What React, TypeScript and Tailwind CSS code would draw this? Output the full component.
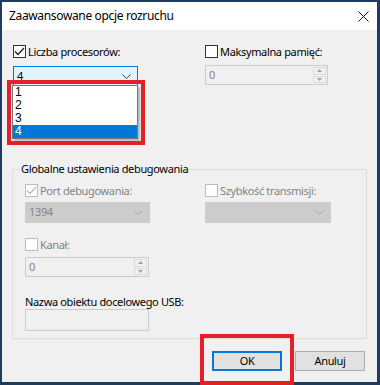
import React from "react";

function Check({ checked = false, disabled = false }: { checked?: boolean; disabled?: boolean }) {
  return (
    <span
      className={`flex h-[13px] w-[13px] shrink-0 items-center justify-center border bg-white ${
        disabled ? "border-[#bcbcbc]" : "border-[#333333]"
      }`}
    >
      {checked && (
        <svg width="11" height="9" viewBox="0 0 11 9" aria-hidden>
          <path
            d="M1 4.5 L4 7.5 L10 1"
            fill="none"
            stroke={disabled ? "#bcbcbc" : "#222222"}
            strokeWidth="1.3"
          />
        </svg>
      )}
    </span>
  );
}

function CheckRow({
  label,
  checked,
  disabled,
}: {
  label: string;
  checked?: boolean;
  disabled?: boolean;
}) {
  return (
    <div className="flex h-[13px] items-center gap-[2px]">
      <Check checked={checked} disabled={disabled} />
      <span className={`leading-[13px] ${disabled ? "text-[#838383]" : "text-black"}`}>{label}</span>
    </div>
  );
}

function Chevron({ color }: { color: string }) {
  return (
    <svg width="9" height="5" viewBox="0 0 9 5" aria-hidden>
      <path d="M0.5 0.5 L4.5 4.5 L8.5 0.5" fill="none" stroke={color} strokeWidth="1" />
    </svg>
  );
}

function Select({
  value,
  width,
  active,
}: {
  value: string;
  width: string;
  active?: boolean;
}) {
  return (
    <div
      className={`flex h-[21px] items-center justify-between border pl-[3px] pr-[6px] ${width} ${
        active ? "border-[#0078d7] bg-[#e5f1fb] text-black" : "border-[#cccccc] bg-[#cccccc] text-[#838383]"
      }`}
    >
      <span>{value}</span>
      <Chevron color={active ? "#444444" : "#a8a8a8"} />
    </div>
  );
}

function Spin({ width }: { width: string }) {
  return (
    <div className={`flex h-[20px] border border-[#cccccc] bg-[#f0f0f0] ${width}`}>
      <span className="flex flex-1 items-center pl-[3px] text-[#838383]">0</span>
      <div className="flex w-[15px] flex-col gap-px p-px">
        <span className="flex flex-1 items-center justify-center border border-[#dcdcdc] bg-[#f0f0f0]">
          <svg width="5" height="3" viewBox="0 0 5 3" aria-hidden>
            <path d="M0 3 L2.5 0 L5 3 Z" fill="#a0a0a0" />
          </svg>
        </span>
        <span className="flex flex-1 items-center justify-center border border-[#dcdcdc] bg-[#f0f0f0]">
          <svg width="5" height="3" viewBox="0 0 5 3" aria-hidden>
            <path d="M0 0 L2.5 3 L5 0 Z" fill="#a0a0a0" />
          </svg>
        </span>
      </div>
    </div>
  );
}

const ITEMS = ["1", "2", "3", "4"];

export default function App() {
  return (
    <div
      className="relative flex h-[385px] w-[380px] flex-col border-t-2 border-r-[3px] border-b-[3px] border-l-2 border-[#1d3c60] bg-[#f0f0f0] text-[11px] tracking-[-0.35px] text-black"
      style={{ fontFamily: '"Segoe UI", "Noto Sans", sans-serif' }}
    >
      <div className="flex h-[28px] items-center justify-between bg-white pr-[8px] pl-[7px]">
        <span className="text-[12px]">Zaawansowane opcje rozruchu</span>
        <svg width="11" height="11" viewBox="0 0 11 11" aria-hidden>
          <path d="M0.5 0.5 L10.5 10.5 M10.5 0.5 L0.5 10.5" stroke="#111111" strokeWidth="1" />
        </svg>
      </div>

      <div className="flex flex-1 flex-col pt-[15px] pr-[10px] pl-[11px]">
        <div className="grid grid-cols-[192px_1fr]">
          <div className="flex flex-col gap-[8px]">
            <CheckRow label="Liczba procesorów:" checked />
            <Select value="4" width="w-[125px]" active />
          </div>
          <div className="flex flex-col gap-[7px]">
            <CheckRow label="Maksymalna pamięć:" />
            <Spin width="w-[123px]" />
          </div>
        </div>

        <fieldset className="mt-[74px] -ml-px h-[178px] border border-[#dcdcdc] pr-[10px] pl-[12px]">
          <legend className="-ml-[5px] px-[1px] leading-[16px]">Globalne ustawienia debugowania</legend>
          <div className="grid grid-cols-[180px_1fr] pt-[7px]">
            <div className="flex flex-col gap-[5px]">
              <CheckRow label="Port debugowania:" checked disabled />
              <Select value="1394" width="w-[125px]" />
            </div>
            <div className="flex flex-col gap-[5px]">
              <CheckRow label="Szybkość transmisji:" disabled />
              <Select value="" width="w-[126px]" />
            </div>
          </div>
          <div className="mt-[15px] flex flex-col gap-[6px]">
            <CheckRow label="Kanał:" disabled />
            <Spin width="w-[124px]" />
          </div>
          <div className="mt-[18px] leading-[13px]">Nazwa obiektu docelowego USB:</div>
          <div className="mt-[1px] h-[22px] w-[124px] border border-[#cccccc] bg-[#f0f0f0]" />
        </fieldset>

        <div className="mt-[12px] flex justify-end gap-[13px] pr-[2px]">
          <button className="h-[20px] w-[70px] border-2 border-[#0078d7] bg-[#e1e1e1]">OK</button>
          <button className="h-[20px] w-[70px] border border-[#adadad] bg-[#e1e1e1]">Anuluj</button>
        </div>
      </div>

      <div className="absolute top-[83px] left-[10px] flex w-[126px] flex-col border border-[#767676] bg-white font-['Liberation_Sans',sans-serif] text-[12px] shadow-[2px_2px_2px_rgba(0,0,0,0.25)]">
        {ITEMS.map((item) => (
          <div
            key={item}
            className={`h-[13px] pl-[2px] leading-[13px] ${item === "4" ? "bg-[#0078d7] text-white" : ""}`}
          >
            {item}
          </div>
        ))}
      </div>

      <div className="absolute top-[78px] left-[5px] h-[65px] w-[138px] border-[4px] border-[#e51f2a]" />
      <div className="absolute top-[332px] left-[198px] h-[51px] w-[94px] border-[4px] border-[#e51f2a]" />
    </div>
  );
}
